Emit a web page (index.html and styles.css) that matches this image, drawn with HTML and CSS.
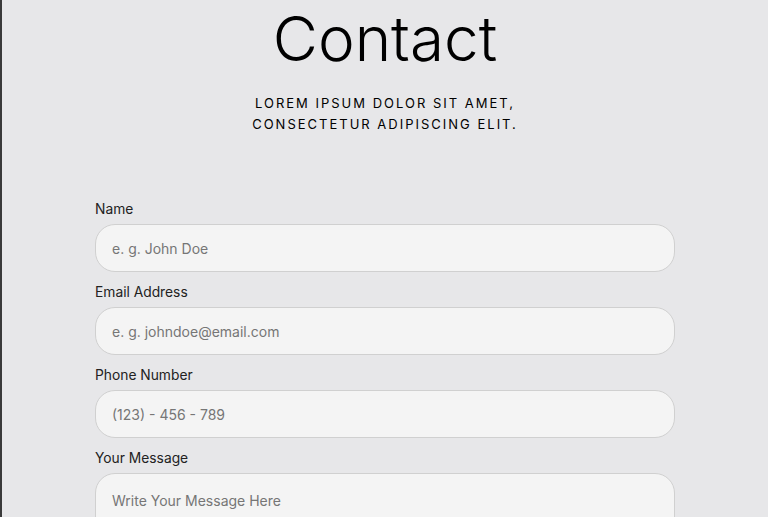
FILE: index.html
```html
<!DOCTYPE html>
<html lang="en">
<head>
    <meta charset="UTF-8">
    <meta name="viewport" content="width=device-width, initial-scale=1.0">
    <title>Contact</title>
    <link rel="stylesheet" href="styles.css">
</head>
<body>

    <section class="contact">
        <h1 class="contact-title">Contact</h1>
        <p class="contact-subtitle">Lorem ipsum dolor sit amet,<br>consectetur adipiscing elit.</p>

        <form class="contact-form">
            <div class="field">
                <label for="name">Name</label>
                <input type="text" id="name" placeholder="e. g. John Doe">
            </div>
            <div class="field">
                <label for="email">Email Address</label>
                <input type="email" id="email" placeholder="e. g. johndoe@email.com">
            </div>
            <div class="field">
                <label for="phone">Phone Number</label>
                <input type="tel" id="phone" placeholder="(123) - 456 - 789">
            </div>
            <div class="field">
                <label for="message">Your Message</label>
                <textarea id="message" rows="6" placeholder="Write Your Message Here"></textarea>
            </div>
        </form>
    </section>

</body>
</html>
```

FILE: styles.css
```css
body, html {
    margin: 0;
    padding: 0;
    height: 100%;
    overflow: hidden;
}

body {
    font-family: Inter, "Noto Sans", sans-serif;
    background: #e7e7e9;
    border-left: 2px solid #3a3a3a;
    color: #111;
}

.contact {
    display: flex;
    flex-direction: column;
    align-items: center;
}

.contact-title {
    margin: 0;
    padding-top: 1px;
    font-size: 62px;
    font-weight: 300;
    color: #000;
}

.contact-subtitle {
    margin: 17px 0 0;
    font-size: 13px;
    line-height: 21px;
    letter-spacing: 2px;
    text-transform: uppercase;
    text-align: center;
    color: #000;
}

.contact-form {
    width: 580px;
    margin-top: 65px;
    display: flex;
    flex-direction: column;
    gap: 11px;
}

.field {
    display: flex;
    flex-direction: column;
}

.field label {
    font-size: 13.8px;
    line-height: 17px;
    padding-top: 1px;
    margin-bottom: 6px;
    color: #222;
}

.field input,
.field textarea {
    font-family: inherit;
    font-size: 14px;
    height: 48px;
    box-sizing: border-box;
    padding: 0 16px;
    background: #f4f4f4;
    border: 1px solid #d0d0d0;
    border-radius: 20px;
    outline: none;
    color: #111;
}

.field textarea {
    height: 150px;
    padding: 18px 16px;
    resize: none;
}

.field input::placeholder,
.field textarea::placeholder {
    color: #767676;
}
```
